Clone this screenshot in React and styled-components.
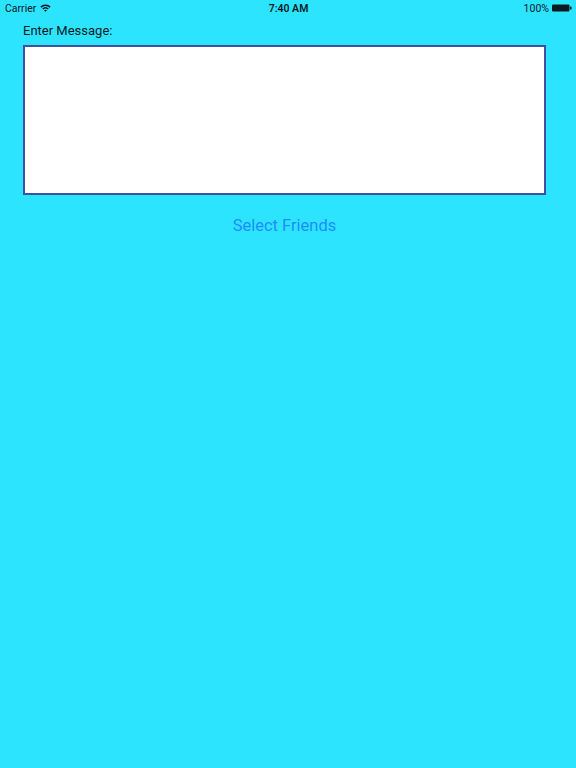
import React from "react";
import styled, { createGlobalStyle } from "styled-components";

const Global = createGlobalStyle`
  html, body { margin: 0; padding: 0; background: #2de4ff; }
  body { font-family: Roboto, "Liberation Sans", sans-serif; }
`;

const Page = styled.div`
  width: 576px;
  height: 768px;
  background: #2de4ff;
  display: flex;
  flex-direction: column;
`;

const StatusBar = styled.div`
  height: 16px;
  display: grid;
  grid-template-columns: 1fr auto 1fr;
  align-items: center;
  padding: 0 4px 0 5px;
  font-size: 10.5px;
  color: #0b1a1f;
`;

const Left = styled.div`
  display: flex;
  align-items: center;
  gap: 4px;
`;

const Time = styled.div`
  font-weight: 600;
  font-size: 10.5px;
`;

const Right = styled.div`
  display: flex;
  align-items: center;
  justify-content: flex-end;
  gap: 3px;
`;

const Content = styled.div`
  padding: 7px 30px 0 23px;
  display: flex;
  flex-direction: column;
`;

const Label = styled.div`
  font-size: 13px;
  color: #0b1a1f;
  line-height: 16px;
  margin-bottom: 6px;
`;

const MessageBox = styled.textarea`
  box-sizing: border-box;
  width: 523px;
  height: 150px;
  border: 2px solid #3f52a0;
  background: #fff;
  resize: none;
  outline: none;
  margin: 0;
  padding: 4px;
  font-family: inherit;
`;

const SelectButton = styled.button`
  align-self: center;
  margin-top: 21px;
  background: none;
  border: 0;
  padding: 0;
  font-family: inherit;
  font-size: 16.5px;
  color: #1e8dff;
  cursor: pointer;
`;

const Wifi = () => (
  <svg width="11" height="8" viewBox="0 0 11 8">
    <path d="M0.3 2.6 A7.5 7.5 0 0 1 10.7 2.6 L9.6 3.7 A6 6 0 0 0 1.4 3.7 Z" fill="#0b1a1f" />
    <path d="M2.2 4.5 A4.8 4.8 0 0 1 8.8 4.5 L7.7 5.6 A3.2 3.2 0 0 0 3.3 5.6 Z" fill="#0b1a1f" />
    <path d="M4.1 6.4 A2 2 0 0 1 6.9 6.4 L5.5 7.8 Z" fill="#0b1a1f" />
  </svg>
);

const Battery = () => (
  <svg width="20" height="8" viewBox="0 0 20 8">
    <rect x="0" y="0.5" width="17.5" height="7" rx="1" fill="#0b1a1f" />
    <rect x="18" y="2.5" width="1.5" height="3" rx="0.5" fill="#0b1a1f" />
  </svg>
);

export default function App() {
  return (
    <>
      <Global />
      <Page>
        <StatusBar>
          <Left>
            <span>Carrier</span>
            <Wifi />
          </Left>
          <Time>7:40 AM</Time>
          <Right>
            <span>100%</span>
            <Battery />
          </Right>
        </StatusBar>
        <Content>
          <Label>Enter Message:</Label>
          <MessageBox />
          <SelectButton>Select Friends</SelectButton>
        </Content>
      </Page>
    </>
  );
}
